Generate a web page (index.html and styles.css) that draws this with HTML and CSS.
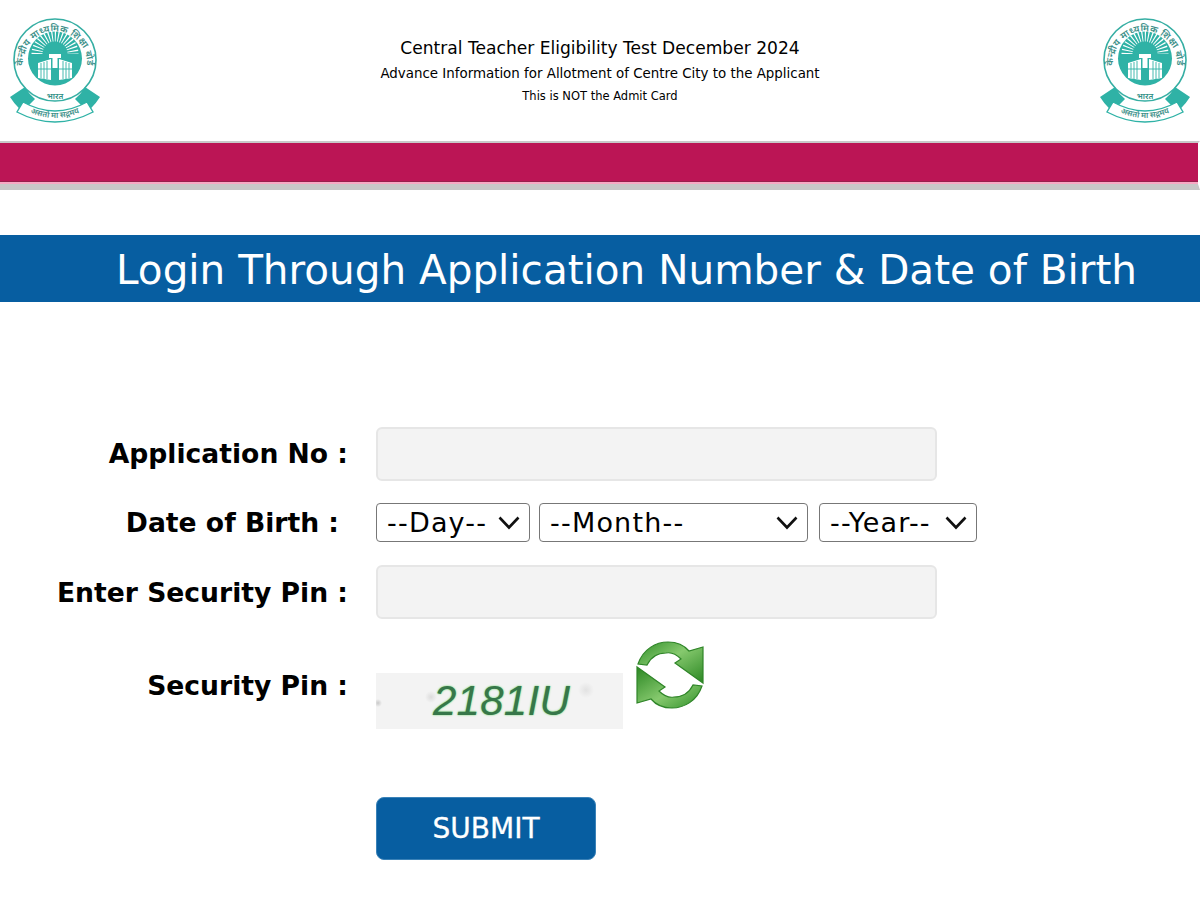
FILE: index.html
```html
<!DOCTYPE html>
<html lang="en">
<head>
<meta charset="utf-8">
<title>Central Teacher Eligibility Test December 2024</title>
<link rel="stylesheet" href="styles.css">
</head>
<body>
<svg class="defs" width="0" height="0" aria-hidden="true">
  <defs>
    <path id="ring-arc" d="M16 59 A32 32 0 1 1 74 59"/>
    <path id="ribbon-arc" d="M15 92 Q45 108 75 92"/>
    <g id="cbse-logo">
      <circle cx="45" cy="42" r="41" fill="#fff" stroke="#35aea3" stroke-width="1.6"/>
      <circle cx="45" cy="40.5" r="27" fill="#2fb2a6"/>
      <text class="logo-ring"><textPath href="#ring-arc" startOffset="50%" text-anchor="middle">केन्द्रीय माध्यमिक शिक्षा बोर्ड</textPath></text>
      <path d="M27 36 A18 18 0 0 1 63 36" fill="none" stroke="#fff" stroke-width="11" stroke-dasharray="1.1 2"/>
      <path d="M39 36 H51 V40 H47.5 V50 H42.5 V40 H39Z" fill="#fff"/>
      <path d="M28 45 L41 41 V62 L28 60Z M62 45 L49 41 V62 L62 60Z" fill="#fff"/>
      <path d="M31 45 V60 M34 44 V61 M37 43 V61 M59 45 V60 M56 44 V61 M53 43 V61 M28 51 H41 M49 51 H62" stroke="#2fb2a6" stroke-width="0.9"/>
      <path d="M0 79 L15 69 Q19 76 25 81 L18 88 L22 100 Q8 92 0 79Z M90 79 L75 69 Q71 76 65 81 L72 88 L68 100 Q82 92 90 79Z" fill="#2fb2a6"/>
      <path d="M13 84 Q45 102 77 84 L83 94 Q45 114 7 94Z" fill="#fff" stroke="#2fb2a6" stroke-width="1.4"/>
      <text class="logo-bharat" x="45" y="81" text-anchor="middle">भारत</text>
      <text class="logo-ribbon"><textPath href="#ribbon-arc" startOffset="50%" text-anchor="middle">असतो मा सद्गमय</textPath></text>
    </g>
  </defs>
</svg>
<header class="top">
  <svg class="logo" viewBox="0 0 90 105" role="img" aria-label="CBSE logo"><use href="#cbse-logo"/></svg>
  <div class="titles">
    <div class="t1">Central Teacher Eligibility Test December 2024</div>
    <div class="t2">Advance Information for Allotment of Centre City to the Applicant</div>
    <div class="t3">This is NOT the Admit Card</div>
  </div>
  <svg class="logo" viewBox="0 0 90 105" role="img" aria-label="CBSE logo"><use href="#cbse-logo"/></svg>
</header>
<div class="band"></div>
<h1 class="login-title">Login Through Application Number &amp; Date of Birth</h1>
<form class="form">
  <div class="row row-input">
    <label class="lbl">Application No :</label>
    <input class="field" type="text">
  </div>
  <div class="row row-dob">
    <label class="lbl lbl-dob">Date of Birth :</label>
    <div class="selects">
      <select class="sel sel-day"><option>--Day--</option></select>
      <select class="sel sel-month"><option>--Month--</option></select>
      <select class="sel sel-year"><option>--Year--</option></select>
    </div>
  </div>
  <div class="row row-input">
    <label class="lbl lbl-pin">Enter Security Pin :</label>
    <input class="field" type="text">
  </div>
  <div class="row row-captcha">
    <label class="lbl">Security Pin :</label>
    <div class="captcha"><span class="captcha-text">2181IU</span></div>
    <svg class="refresh" viewBox="0 0 68 68" role="img" aria-label="Refresh">
      <defs>
        <linearGradient id="g1" x1="0" y1="0" x2="1" y2="1"><stop offset="0" stop-color="#2f8f28"/><stop offset=".45" stop-color="#86c96e"/><stop offset="1" stop-color="#2b8723"/></linearGradient>
        <path id="arrow" d="M2 23 C7 8 20 1 32 1 C41 1 48 4 53 10 L67 6 V42 L39 22 L45 18 C40 13 35 11 30 12 C22 12 15 16 11 24 Z" fill="url(#g1)" stroke="#2f8528" stroke-width="1.2"/>
      </defs>
      <use href="#arrow"/>
      <use href="#arrow" transform="rotate(180 34 34)"/>
    </svg>
  </div>
  <div class="row row-submit">
    <button class="submit" type="button">SUBMIT</button>
  </div>
</form>
</body>
</html>
```
FILE: styles.css
```css
* { box-sizing: border-box; }
html, body { margin: 0; padding: 0; background: #fff; }
body { font-family: "DejaVu Sans", Verdana, sans-serif; color: #000; width: 1200px; height: 900px; overflow: hidden; }
.defs { position: absolute; }

.top { height: 141px; display: flex; justify-content: space-between; padding: 18px 10px 0 10px; }
.logo { width: 90px; height: 105px; display: block; }
.logo-ring { font-family: "Noto Sans", sans-serif; font-size: 9.4px; font-weight: 600; fill: #3c8f88; letter-spacing: 0.4px; }
.logo-bharat { font-family: "Noto Sans", sans-serif; font-size: 8px; font-weight: 600; fill: #2f8f86; }
.logo-ribbon { font-family: "Noto Sans", sans-serif; font-size: 8px; font-weight: 600; fill: #3c8f88; }
.titles { text-align: center; padding-top: 19px; }
.t1 { font-size: 17.1px; line-height: 22px; }
.t2 { font-size: 13.4px; line-height: 20px; margin-top: 5px; }
.t3 { font-size: 11.5px; line-height: 14px; margin-top: 5px; }

.band { height: 49px; background: #bb1555; border-top: 2px solid #c9c9c9; border-bottom: 6px solid #c8c8c8; border-right: 2px solid #fff; box-shadow: inset 0 -2px 0 #f7a9c4, inset 0 -3px 0 #96204d; }

.login-title { margin: 45px 0 0; height: 67px; background: #075ea1; color: #fff; font-weight: 400; font-size: 40.5px; line-height: 70px; padding-left: 116px; white-space: nowrap; }

.form { padding-top: 125px; }
.row { display: flex; align-items: center; }
.lbl { width: 348px; text-align: right; font-weight: 700; font-size: 26.6px; line-height: 52px; white-space: nowrap; flex: none; }
.lbl-dob { width: 339px; margin-right: 9px; }
.lbl-pin { padding-top: 1px; }
.field, .selects, .captcha { margin-left: 28px; }
.field { width: 561px; height: 54px; background: #f3f3f3; border: 2px solid #e6e6e6; border-radius: 6px; }
.row-input { height: 54px; }
.row-dob { height: 39px; margin: 22px 0 23px; }
.selects { display: flex; }
.sel { appearance: none; height: 39px; border: 1px solid #777; border-radius: 4px; font-family: inherit; font-size: 27px; letter-spacing: 1.2px; color: #000; padding: 0 0 0 10px; background: #fff url("data:image/svg+xml,%3Csvg xmlns='http://www.w3.org/2000/svg' width='22' height='14'%3E%3Cpath d='M1.5 1.5l9.5 10 9.5-10' fill='none' stroke='%23111' stroke-width='2.6'/%3E%3C/svg%3E") no-repeat right 9px center; }
.sel-day { width: 154px; }
.sel-month { width: 269px; margin-left: 9px; }
.sel-year { width: 158px; margin-left: 11px; }

.row-captcha { height: 88px; margin-top: 22px; align-items: flex-start; }
.row-captcha .lbl { margin-top: 19px; }
.captcha { width: 247px; height: 56px; margin-top: 32px; padding-left: 4px; background: radial-gradient(circle at 2px 30px, #c9c9c9 0, transparent 4px), radial-gradient(circle at 55px 24px, #dcdcdc 0, transparent 6px), radial-gradient(circle at 210px 17px, #e2e2e2 0, transparent 8px), #f3f3f3; display: flex; align-items: center; justify-content: center; }
.captcha-text { font-size: 42px; font-style: italic; font-family: "Liberation Sans", sans-serif; color: #37774a; letter-spacing: 0.3px; text-shadow: 0 0 2px #57d257; }
.refresh { width: 68px; height: 68px; margin-left: 13px; flex: none; }

.row-submit { margin-top: 68px; padding-left: 376px; }
.submit { width: 220px; height: 63px; background: #075ea1; color: #fff; border: 1px solid #3a82b8; border-radius: 8px; font-family: inherit; font-size: 28px; padding: 0; -webkit-text-stroke: 0.3px #fff; }
```
